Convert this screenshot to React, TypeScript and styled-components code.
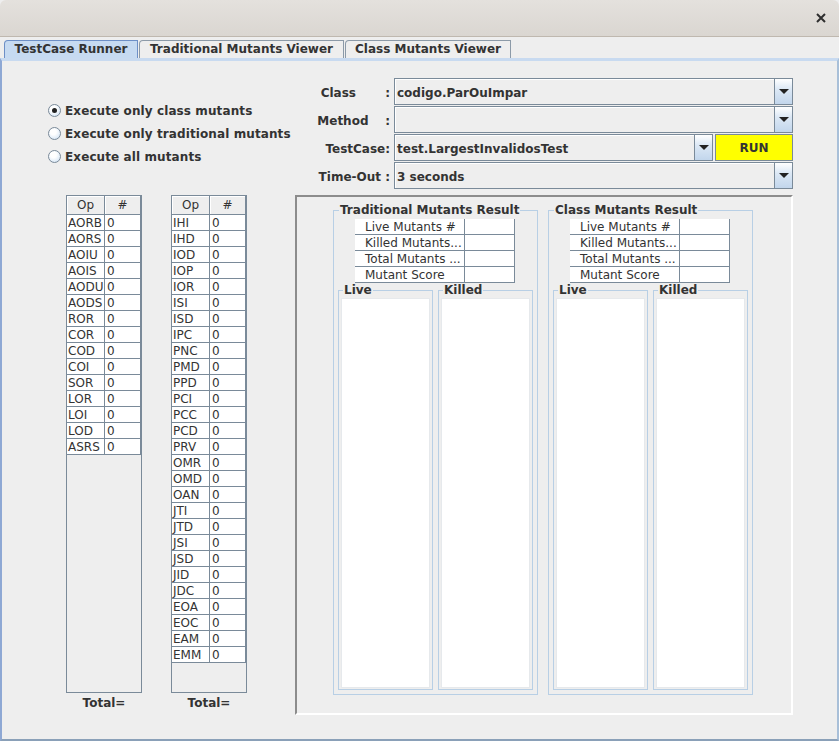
import React from "react";
import styled, { createGlobalStyle } from "styled-components";

const GlobalStyle = createGlobalStyle`
  html, body {
    margin: 0;
    padding: 0;
    background: #eeeeee;
  }
  body {
    font-family: "DejaVu Sans", "Liberation Sans", sans-serif;
    font-size: 12px;
    color: #333333;
  }
  * { box-sizing: border-box; }
`;

const classOps = [
  "AORB", "AORS", "AOIU", "AOIS", "AODU", "AODS", "ROR", "COR",
  "COD", "COI", "SOR", "LOR", "LOI", "LOD", "ASRS",
];

const traditionalOps = [
  "IHI", "IHD", "IOD", "IOP", "IOR", "ISI", "ISD", "IPC", "PNC", "PMD",
  "PPD", "PCI", "PCC", "PCD", "PRV", "OMR", "OMD", "OAN", "JTI", "JTD",
  "JSI", "JSD", "JID", "JDC", "EOA", "EOC", "EAM", "EMM",
];

const summaryRows = ["Live Mutants #", "Killed Mutants...", "Total Mutants ...", "Mutant Score"];

const Window = styled.div`
  width: 839px;
  height: 741px;
  display: flex;
  flex-direction: column;
  overflow: hidden;
  background: #eeeeee;
`;

const TitleBar = styled.div`
  height: 37px;
  flex: none;
  display: flex;
  align-items: center;
  justify-content: flex-end;
  padding-right: 13px;
  background: linear-gradient(#e4e1dd, #dad6d1);
  border-bottom: 1px solid #bfb8af;
  border-radius: 6px 6px 0 0;
`;

const CloseButton = styled.div`
  width: 10px;
  height: 10px;
  display: flex;
`;

const TabStrip = styled.div`
  height: 21px;
  flex: none;
  display: flex;
  align-items: flex-end;
  gap: 1px;
  padding-left: 4px;
`;

const Tab = styled.div<{ $width: number; $active?: boolean }>`
  width: ${(p) => p.$width}px;
  height: 18px;
  display: flex;
  align-items: center;
  justify-content: center;
  padding-bottom: 1px;
  font-weight: bold;
  font-size: 12px;
  border: 1px solid ${(p) => (p.$active ? "#6d8fc6" : "#8c9aa8")};
  border-bottom: none;
  border-top-left-radius: 4px;
  background: ${(p) => (p.$active ? "#c6daf1" : "#eeeeee")};
`;

const TabBody = styled.div`
  flex: 1;
  display: flex;
  border-top: 3px solid #c8daf0;
  border-left: 2px solid #8ea8d4;
  border-right: 2px solid #a8bfd8;
  border-bottom: 2px solid #8aa0b8;
`;

const LeftColumn = styled.div`
  width: 293px;
  display: flex;
  flex-direction: column;
`;

const RadioGroup = styled.div`
  display: flex;
  flex-direction: column;
  margin: 38px 0 0 46px;
`;

const RadioRow = styled.div`
  height: 23px;
  display: flex;
  align-items: center;
  gap: 4px;
  font-weight: bold;
  letter-spacing: 0.1px;
`;

const RadioCircle = styled.span<{ $checked?: boolean }>`
  width: 13px;
  height: 13px;
  border-radius: 50%;
  border: 1px solid #7a8a99;
  background: radial-gradient(circle at 40% 35%, #ffffff 30%, #c8ddf2 100%);
  display: flex;
  align-items: center;
  justify-content: center;

  &::after {
    content: "";
    width: 5px;
    height: 5px;
    border-radius: 50%;
    background: ${(p) => (p.$checked ? "#222222" : "transparent")};
  }
`;

const TablesRow = styled.div`
  display: flex;
  gap: 29px;
  margin: 27px 0 0 64px;
`;

const TableColumn = styled.div`
  display: flex;
  flex-direction: column;
  align-items: center;
`;

const OpTable = styled.div`
  width: 76px;
  height: 498px;
  border: 1px solid #7a8a99;
  background: #eeeeee;
  display: flex;
  flex-direction: column;
`;

const OpRow = styled.div<{ $header?: boolean }>`
  display: grid;
  grid-template-columns: 38px 36px;
  height: ${(p) => (p.$header ? 19 : 16)}px;
  background: ${(p) => (p.$header ? "#eeeeee" : "#ffffff")};
`;

const OpCell = styled.div<{ $header?: boolean; $pad: number }>`
  border-right: 1px solid #7a8a99;
  border-bottom: 1px solid #7a8a99;
  padding-left: ${(p) => p.$pad}px;
  line-height: ${(p) => (p.$header ? 18 : 16)}px;
  text-align: ${(p) => (p.$header ? "center" : "left")};
  white-space: nowrap;
  overflow: hidden;
  ${(p) => (p.$header ? "box-shadow: inset 1px 1px 0 #ffffff;" : "")}
`;

const TotalLabel = styled.div`
  margin-top: 2px;
  line-height: 16px;
  font-weight: bold;
`;

const RightColumn = styled.div`
  width: 498px;
  padding-top: 17px;
  display: flex;
  flex-direction: column;
`;

const FormRow = styled.div`
  height: 27px;
  margin-bottom: 1px;
  display: flex;
`;

const FieldLabel = styled.div`
  width: 99px;
  padding: 2px 4px 0 0;
  text-align: right;
  white-space: pre;
  font-weight: bold;
  line-height: 27px;
`;

const Combo = styled.div`
  flex: 1;
  display: flex;
  border: 1px solid #7a8a99;
  background: #eeeeee;
`;

const ComboValue = styled.div`
  flex: 1;
  padding: 2px 0 0 2px;
  font-weight: bold;
  line-height: 24px;
  box-shadow: inset 1px 1px 0 #ffffff;
`;

const ComboArrow = styled.div`
  width: 18px;
  border-left: 1px solid #7a8a99;
  background: linear-gradient(#ffffff, #dce8f5 40%, #c2d6ec);
  display: flex;
  align-items: center;
  justify-content: center;

  &::after {
    content: "";
    border-left: 5px solid transparent;
    border-right: 5px solid transparent;
    border-top: 5px solid #222222;
  }
`;

const RunButton = styled.div`
  width: 78px;
  margin-left: 2px;
  padding-top: 1px;
  background: #ffff00;
  border: 1px solid #7a8a99;
  display: flex;
  align-items: center;
  justify-content: center;
  font-weight: bold;
`;

const ResultPanel = styled.div`
  margin-top: 5px;
  height: 520px;
  border-style: solid;
  border-width: 2px;
  border-color: #8c8c8c #ffffff #ffffff #8c8c8c;
  display: flex;
  gap: 10px;
  padding: 13px 0 0 36px;
`;

const Group = styled.div`
  width: 205px;
  height: 485px;
  border: 1px solid #b8cfe5;
  display: flex;
  flex-direction: column;
`;

const GroupTitle = styled.div<{ $indent: number }>`
  align-self: flex-start;
  margin: -8px 0 0 ${(p) => p.$indent}px;
  padding: 0 1px;
  background: #eeeeee;
  font-weight: bold;
  line-height: 14px;
`;

const Summary = styled.div`
  width: 160px;
  margin: 2px 0 0 21px;
  display: grid;
  grid-template-columns: 110px 50px;
  background: #ffffff;
`;

const SummaryCell = styled.div<{ $first?: boolean }>`
  height: 16px;
  line-height: 17px;
  padding-left: ${(p) => (p.$first ? 10 : 0)}px;
  border-right: 1px solid #7a8a99;
  border-bottom: 1px solid #7a8a99;
  white-space: nowrap;
`;

const ListsRow = styled.div`
  display: flex;
  gap: 5px;
  margin: 7px 0 0 4px;
`;

const ListGroup = styled.div`
  width: 95px;
  height: 400px;
  border: 1px solid #b8cfe5;
  display: flex;
  flex-direction: column;
  padding: 0 2px 1px;
`;

const ListBox = styled.div`
  flex: 1;
  margin-top: 1px;
  background: #ffffff;
  border: 1px solid #e6e9ec;
`;

function Radio({ label, checked }: { label: string; checked?: boolean }) {
  return (
    <RadioRow>
      <RadioCircle $checked={checked} />
      {label}
    </RadioRow>
  );
}

function OperatorTable({ ops }: { ops: string[] }) {
  return (
    <TableColumn>
      <OpTable>
        <OpRow $header>
          <OpCell $header $pad={0}>Op</OpCell>
          <OpCell $header $pad={0}>#</OpCell>
        </OpRow>
        {ops.map((op) => (
          <OpRow key={op}>
            <OpCell $pad={1}>{op}</OpCell>
            <OpCell $pad={2}>0</OpCell>
          </OpRow>
        ))}
      </OpTable>
      <TotalLabel>Total=</TotalLabel>
    </TableColumn>
  );
}

function ResultGroup({ title }: { title: string }) {
  return (
    <Group>
      <GroupTitle $indent={5}>{title}</GroupTitle>
      <Summary>
        {summaryRows.map((row) => (
          <React.Fragment key={row}>
            <SummaryCell $first>{row}</SummaryCell>
            <SummaryCell />
          </React.Fragment>
        ))}
      </Summary>
      <ListsRow>
        <ListGroup>
          <GroupTitle $indent={2}>Live</GroupTitle>
          <ListBox />
        </ListGroup>
        <ListGroup>
          <GroupTitle $indent={2}>Killed</GroupTitle>
          <ListBox />
        </ListGroup>
      </ListsRow>
    </Group>
  );
}

export default function App() {
  return (
    <>
      <GlobalStyle />
      <Window>
        <TitleBar>
          <CloseButton>
            <svg width="10" height="10" viewBox="0 0 10 10">
              <path d="M1 1 L9 9 M9 1 L1 9" stroke="#2e2e2e" strokeWidth="2" />
            </svg>
          </CloseButton>
        </TitleBar>
        <TabStrip>
          <Tab $width={134} $active>TestCase Runner</Tab>
          <Tab $width={205}>Traditional Mutants Viewer</Tab>
          <Tab $width={166}>Class Mutants Viewer</Tab>
        </TabStrip>
        <TabBody>
          <LeftColumn>
            <RadioGroup>
              <Radio label="Execute only class mutants" checked />
              <Radio label="Execute only traditional mutants" />
              <Radio label="Execute all mutants" />
            </RadioGroup>
            <TablesRow>
              <OperatorTable ops={classOps} />
              <OperatorTable ops={traditionalOps} />
            </TablesRow>
          </LeftColumn>
          <RightColumn>
            <FormRow>
              <FieldLabel>{"Class       :"}</FieldLabel>
              <Combo>
                <ComboValue>codigo.ParOuImpar</ComboValue>
                <ComboArrow />
              </Combo>
            </FormRow>
            <FormRow>
              <FieldLabel>{"Method    :"}</FieldLabel>
              <Combo>
                <ComboValue />
                <ComboArrow />
              </Combo>
            </FormRow>
            <FormRow>
              <FieldLabel>TestCase:</FieldLabel>
              <Combo>
                <ComboValue>test.LargestInvalidosTest</ComboValue>
                <ComboArrow />
              </Combo>
              <RunButton>RUN</RunButton>
            </FormRow>
            <FormRow>
              <FieldLabel>{"Time-Out :"}</FieldLabel>
              <Combo>
                <ComboValue>3 seconds</ComboValue>
                <ComboArrow />
              </Combo>
            </FormRow>
            <ResultPanel>
              <ResultGroup title="Traditional Mutants Result" />
              <ResultGroup title="Class Mutants Result" />
            </ResultPanel>
          </RightColumn>
        </TabBody>
      </Window>
    </>
  );
}
